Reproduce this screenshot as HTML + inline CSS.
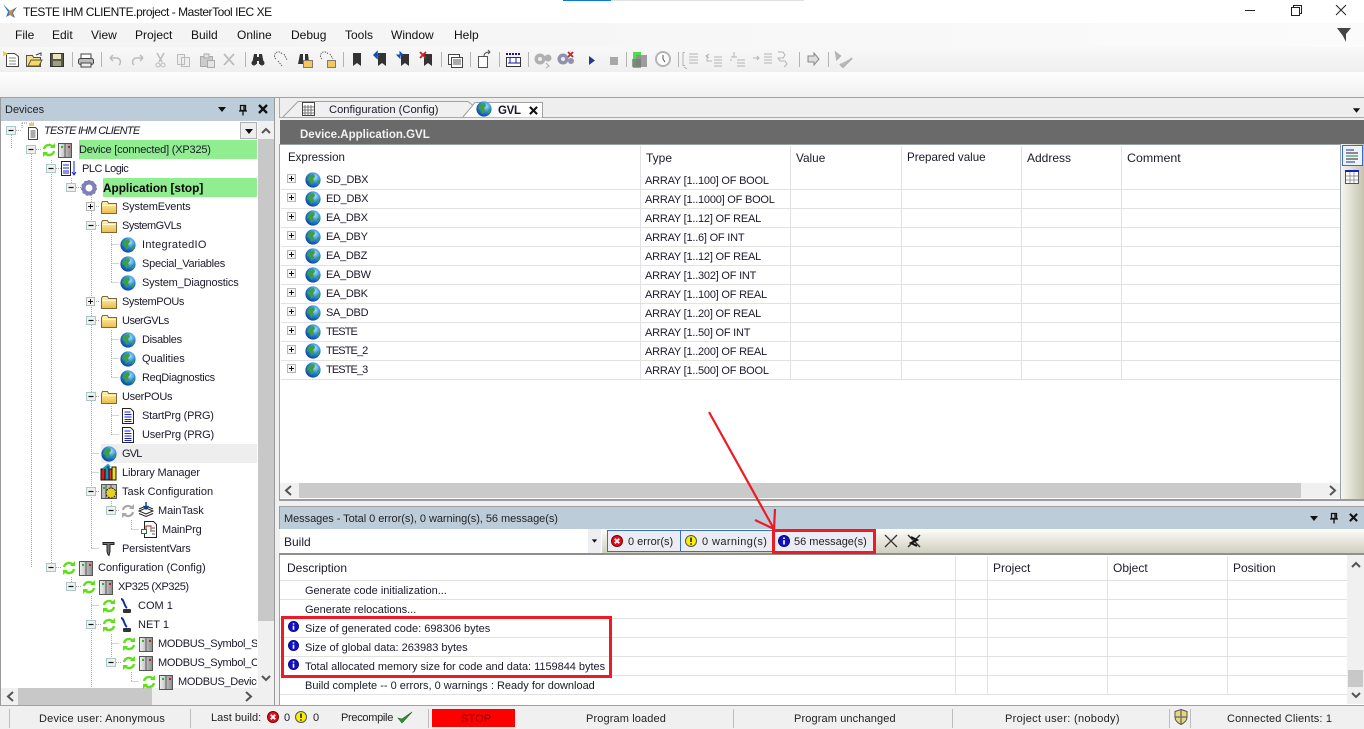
<!DOCTYPE html>
<html><head><meta charset="utf-8"><style>
html,body{margin:0;padding:0;width:1364px;height:728px;overflow:hidden;background:#f0f0f0}
*{box-sizing:border-box}
div,span.a{position:absolute}
.t{position:absolute;white-space:nowrap;font:11px/19px "Liberation Sans",sans-serif;color:#1a1a2a;height:19px}
.m{font-size:12px;line-height:24px;top:23px;color:#111}
.h{font-size:12px;line-height:20px}
.n{margin-top:1px;letter-spacing:-.3px}
.c{margin-top:1px;letter-spacing:-.9px}
.y{margin-top:1px;letter-spacing:-.22px}
.r{margin-top:1px}
.st{margin-top:2px;letter-spacing:.12px}
svg.i{position:absolute;overflow:visible}
.hl{position:absolute;height:1px;background:#e2e2e2}
.vl{position:absolute;width:1px;background:#e2e2e2}
.s{position:absolute;width:1px;background:#bdbdbd;top:709px;height:19px}
.ts{position:absolute;width:1px;background:#b4b4b4;top:52px;height:15px}
</style></head><body>
<svg width="0" height="0" style="position:absolute"><defs>
<radialGradient id="g1" cx=".62" cy=".32" r=".75"><stop offset="0" stop-color="#a8e0ff"/><stop offset=".5" stop-color="#2a86e0"/><stop offset="1" stop-color="#0a3a9a"/></radialGradient>
<linearGradient id="f1" x1="0" y1="0" x2="0" y2="1"><stop offset="0" stop-color="#fff4b8"/><stop offset="1" stop-color="#ecbc48"/></linearGradient>
<linearGradient id="d1" x1="0" y1="0" x2="1" y2="0"><stop offset="0" stop-color="#f2f2f2"/><stop offset="1" stop-color="#8d8d8d"/></linearGradient>
<symbol id="globe" viewBox="0 0 16 16" overflow="visible"><circle cx="8" cy="8" r="7.6" fill="url(#g1)"/><path d="M5 3l4-1 1 3-2 2 1 3-3 3-1-4-3-1 1-3zM12 9l2-1 0 3-2 2z" fill="#3aa040"/></symbol>
<symbol id="fold" viewBox="0 0 16 16"><path d="M.5 4.500l1-2h5l1 2h8v10H.5z" fill="url(#f1)" stroke="#7d6a3a"/><path d="M1.500 6.500h13" stroke="#fff8d8"/></symbol>
<symbol id="sync" viewBox="0 0 14 14"><path d="M2 6a5 5 0 0 1 8.500-2.500M12 8a5 5 0 0 1-8.500 2.500" fill="none" stroke="#5fe01a" stroke-width="2.400"/><path d="M8 5h5V0zM6 9H1v5z" fill="#5fe01a"/></symbol>
<symbol id="syncg" viewBox="0 0 14 14"><path d="M2 6a5 5 0 0 1 8.500-2.500M12 8a5 5 0 0 1-8.500 2.500" fill="none" stroke="#a8a8a8" stroke-width="2.200"/><path d="M8 5h5V0zM6 9H1v5z" fill="#a8a8a8"/></symbol>
<symbol id="dev" viewBox="0 0 14 16"><rect x=".5" y="1.500" width="13" height="14" fill="url(#d1)" stroke="#555"/><path d="M7 2v13" stroke="#555"/><rect x="3" y="4" width="2" height="2" fill="#2ab52a"/><rect x="10" y="4" width="2" height="2" fill="#c02020"/></symbol>
<symbol id="doc" viewBox="0 0 14 16"><path d="M1.500 .5h8l3 3v12h-11z" fill="#fff" stroke="#222"/><path d="M3.500 4h6M3.500 6.500h7M3.500 9h7M3.500 11.500h7M3.500 13.500h7" stroke="#1520d8"/></symbol>
<symbol id="plus" viewBox="0 0 11 11"><rect x="1.500" y="1.500" width="8" height="8" fill="#f4f4f4" stroke="#b5b5b5"/><path d="M3 5.500h5M5.500 3v5" stroke="#111"/></symbol>
<symbol id="minus" viewBox="0 0 11 11"><rect x=".5" y="1.500" width="9" height="8" fill="#f0f0f0" stroke="#a9c8c8"/><path d="M2.500 5.500h5" stroke="#111" stroke-width="1.200"/></symbol>
<symbol id="info" viewBox="0 0 12 12"><circle cx="6" cy="6" r="5.500" fill="#1010c8" stroke="#08087a"/><path d="M6 2.500v1.500M6 5.200V9.500" stroke="#fff" stroke-width="1.700"/></symbol>
<symbol id="err" viewBox="0 0 12 12"><circle cx="6" cy="6" r="5.500" fill="#e01020" stroke="#700"/><path d="M3.800 3.800l4.400 4.400M8.200 3.800L3.800 8.200" stroke="#fff" stroke-width="1.800"/></symbol>
<symbol id="warn" viewBox="0 0 12 12"><circle cx="6" cy="6" r="5.500" fill="#f8f000" stroke="#555"/><path d="M6 2.500V7M6 8.200v1.500" stroke="#222" stroke-width="1.600"/></symbol>
<symbol id="pin" viewBox="0 0 10 12"><path d="M2.500 1.500h5v5h-5zM1 7h8M5 7v4.500M6 2v5" fill="none" stroke="#111" stroke-width="1.300"/></symbol>
<symbol id="x" viewBox="0 0 10 10"><path d="M1 1l8 8M9 1l-8 8" stroke="#111" stroke-width="2.300"/></symbol>
<symbol id="tri" viewBox="0 0 10 5"><path d="M1 0h8L5 5z" fill="#111"/></symbol>
</defs></svg>

<!-- title bar -->
<div style="left:0;top:0;width:1364px;height:23px;background:#fff"></div>
<div style="left:563px;top:0;width:48px;height:1px;background:#0a78d8"></div>
<div style="left:611px;top:0;width:193px;height:1px;background:#e0e0e0"></div>
<svg class="i" style="left:3px;top:3px" width="16" height="16" viewBox="0 0 16 16"><path d="M0 1l7 7 7-4-4 6 2 5-5-3-4 2 2-5z" fill="#2a7fc8"/><path d="M6 8l5-2-2 4 1 4-4-3z" fill="#f08020"/></svg>
<span class="t" style="left:23px;top:2px;font-size:12px;letter-spacing:-.46px;line-height:20px;color:#111">TESTE IHM CLIENTE.project - MasterTool IEC XE</span>
<svg class="i" style="left:1244px;top:4px" width="120" height="14" viewBox="0 0 120 14" fill="none" stroke="#222"><path d="M1 6.500h10"/><path d="M47.500 3.500h8v8h-8zM49.500 3V1.500h8v8H56"/><path d="M92 1l10 10M102 1L92 11"/></svg>

<!-- menu bar -->
<div style="left:0;top:23px;width:1364px;height:24px;background:linear-gradient(90deg,#f3f3f3,#fbfbfb)"></div>
<span class="t m" style="left:15px">File</span><span class="t m" style="left:52px">Edit</span><span class="t m" style="left:91px">View</span><span class="t m" style="left:135px">Project</span><span class="t m" style="left:191px">Build</span><span class="t m" style="left:237px">Online</span><span class="t m" style="left:291px">Debug</span><span class="t m" style="left:345px">Tools</span><span class="t m" style="left:391px">Window</span><span class="t m" style="left:454px">Help</span>
<svg class="i" style="left:1336px;top:27px" width="16" height="16" viewBox="0 0 16 16"><path d="M1 1h14L10 7v8L7 9z" fill="#444"/></svg>

<!-- toolbar -->
<div style="left:0;top:47px;width:1364px;height:25px;background:linear-gradient(#f8f8f8,#efefef)"></div>
<div style="left:0;top:72px;width:1364px;height:25px;background:linear-gradient(#fefefe,#f0f0f0)"></div>
<div class="ts" style="left:72px"></div><div class="ts" style="left:101px"></div><div class="ts" style="left:245px"></div><div class="ts" style="left:343px"></div><div class="ts" style="left:441px"></div><div class="ts" style="left:470px"></div><div class="ts" style="left:499px"></div><div class="ts" style="left:528px"></div><div class="ts" style="left:626px"></div><div class="ts" style="left:678px"></div><div class="ts" style="left:799px"></div><div class="ts" style="left:828px"></div>
<svg class="i" style="left:0;top:47px" width="860" height="25" viewBox="0 0 860 25">
<path d="M6.500 6.500h8l4 3v10h-12z" fill="#fff" stroke="#444"/><path d="M9 11h7M9 14h7M9 17h7" stroke="#888"/><path d="M3 4l5 3-5 2z" fill="#e8d040"/>
<path d="M26.500 8.500h6l1 2h7v9h-14z" fill="#f4e090" stroke="#554"/><path d="M28 19l3-6h11l-3 6z" fill="#f8d860" stroke="#554"/><path d="M36 8l5-2v3" fill="none" stroke="#444"/>
<rect x="50.500" y="6.500" width="13" height="13" fill="#5a5a48" stroke="#333"/><rect x="53" y="7" width="8" height="5" fill="#e8e4c0"/><rect x="53" y="14" width="8" height="5" fill="#a0a080"/>
<path d="M81 11V7h10v4" fill="#fff" stroke="#444"/><rect x="78.500" y="11.500" width="15" height="6" rx="2" fill="#bbb" stroke="#444"/><rect x="81" y="16" width="10" height="4" fill="#eee" stroke="#444"/>
<g fill="none" stroke="#bcbcbc" stroke-width="1.500"><path d="M110 11h7a4 4 0 0 1 2 7M110 11l3-3M110 11l3 3"/><path d="M143 11h-7a4 4 0 0 0-2 7M143 11l-3-3M143 11l-3 3"/><path d="M157 6l5 9M164 6l-5 9"/></g><circle cx="158" cy="18" r="2" fill="none" stroke="#bbb"/><circle cx="163" cy="18" r="2" fill="none" stroke="#bbb"/>
<path d="M177.500 7.500h7v10h-7zM181.500 10.500h8v9h-8z" fill="#eee" stroke="#bbb"/>
<path d="M200.500 9.500h12v10h-12z" fill="#ccc" stroke="#aaa"/><path d="M204 7h5v4h-5zM207.500 13.500h7v7h-7z" fill="#e4e4e4" stroke="#aaa"/>
<path d="M224 7l10 11M234 7l-10 11" stroke="#bdbdbd" stroke-width="1.800"/>
<path d="M252 17l2-10h3v10zM259 17V7h3l2 10zM256 10h4v4h-4z" fill="#333"/><circle cx="254" cy="16" r="2.500" fill="#333"/><circle cx="262" cy="16" r="2.500" fill="#333"/>
<g fill="none" stroke="#666" stroke-dasharray="1.500 1"><path d="M276 12a4 4 0 1 1 6-5M278 14l4 5M284 7l3 6"/></g>
<path d="M298 17l2-10h3v10zM305 17V7h3l1 8z" fill="#333"/><rect x="303.500" y="13.500" width="9" height="7" fill="#f0c860" stroke="#876"/>
<g fill="none" stroke="#666" stroke-dasharray="1.500 1"><path d="M322 12a4 4 0 1 1 6-5M330 7l3 5"/></g><rect x="327.500" y="13.500" width="8" height="7" fill="#f0c860" stroke="#876"/>
<path d="M353 6h8v13l-4-3-4 3z" fill="#333"/><path d="M378 6h8v13l-4-3-4 3z" fill="#333"/><path d="M374 8h6M374 8l3-3v6z" stroke="#1050b0" fill="#1050b0" stroke-width="1.500"/>
<path d="M401 7h8v12l-4-3-4 3z" fill="#333"/><path d="M397 8h6l-3-3v6z" stroke="#1050b0" fill="#1050b0"/><path d="M424 7h8v12l-4-3-4 3z" fill="#333"/><path d="M420 5l6 6M426 5l-6 6" stroke="#c82020" stroke-width="1.800"/>
<rect x="448.500" y="7.500" width="11" height="10" fill="#fff" stroke="#444"/><rect x="451.500" y="10.500" width="11" height="10" fill="#fff" stroke="#444"/><path d="M453 13h8M453 15h8M453 17h8" stroke="#555"/>
<path d="M478.500 9.500h9v11h-9z" fill="#fff" stroke="#555"/><path d="M484 9c0-3 3-4 6-4M488 3l2 2-2 2" fill="none" stroke="#555"/>
<rect x="506.500" y="10.500" width="14" height="9" fill="#fff" stroke="#333"/><path d="M506 7h15" stroke="#1515a0" stroke-dasharray="2 1" stroke-width="2"/><path d="M510 11v5M516 11v5M508 16h12" stroke="#1515a0"/>
<g fill="#b0b0b0"><circle cx="540" cy="12" r="5.500"/><circle cx="548" cy="11" r="3.500"/></g><circle cx="540" cy="12" r="2" fill="#eee"/><path d="M546 16l3 3-3 2" fill="none" stroke="#aaa"/>
<g fill="#9090b0"><circle cx="563" cy="12" r="5.500"/><circle cx="571" cy="14" r="3"/></g><circle cx="563" cy="12" r="2" fill="#eee"/><path d="M568 5l5 5M573 5l-5 5" stroke="#d02020" stroke-width="1.800"/>
<path d="M589 9v9l6-4.500z" fill="#2a3590"/><rect x="610" y="10" width="8" height="8" fill="#a8a8a8"/>
<rect x="633" y="5" width="8" height="16" fill="#4fdc4f"/><rect x="636" y="8" width="11" height="12" fill="#8d8d8d" opacity=".85"/><rect x="632" y="12" width="9" height="8" fill="#777" opacity=".7"/>
<circle cx="663" cy="12" r="7" fill="#fff" stroke="#b4b4b4" stroke-width="2"/><path d="M663 8v4l2 3" stroke="#555" fill="none"/>
<g fill="none" stroke="#b4b4b4"><path d="M685 5.500h-2v13h2M689 7h9M689 10h9M689 13h9M689 16h9M684 20l3 2"/><path d="M708 9h-1v5h5M709 7l-3 2 3 2M714 10h8M714 13h8M714 16h8M714 19h8"/><path d="M731 10h6M734 5v5M730 13h2M737 13h8M737 16h8M737 19h8"/><path d="M753 11h6M757 9l2 2-2 2M764 7h8M764 10h8M764 13h8M764 16h8"/><path d="M778 5h5l2 3-2 3h-5l2 3h5l2 3-3 3"/></g>
<path d="M808 9h6V6l5 6-5 6v-3h-6z" fill="#ddd" stroke="#888"/>
<path d="M836 6l4 3-3 3zM840 17l3 3 9-9" fill="#bbb" stroke="#b4b4b4" stroke-width="2"/>
</svg>

<div style="left:0;top:97px;width:1364px;height:1px;background:#a0a0a0"></div>

<!-- Devices panel -->
<div style="left:0;top:98px;width:275px;height:608px;background:#fff;border:1px solid #9a9a9a;border-top:0"></div>
<div style="left:1px;top:98px;width:273px;height:23px;background:#bdccd9"></div>
<span class="t h" style="left:5px;top:100px;font-size:11px;color:#222">Devices</span>
<svg class="i" style="left:217px;top:107px" width="10" height="5"><use href="#tri"/></svg>
<svg class="i" style="left:238px;top:104px" width="10" height="12"><use href="#pin"/></svg>
<svg class="i" style="left:258px;top:104px" width="10" height="10"><use href="#x"/></svg>

<div style="left:79px;top:140px;width:178px;height:19px;background:#90ee90"></div>
<div style="left:103px;top:178px;width:154px;height:19px;background:#90ee90"></div>
<div style="left:101px;top:444px;width:156px;height:19px;background:#eeeeee"></div>
<div style="left:240px;top:122px;width:17px;height:17px;background:#eee;border:1px solid #b0b0b0"></div>
<svg class="i" style="left:244px;top:129px" width="10" height="5"><use href="#tri"/></svg>

<div style="left:258px;top:121px;width:16px;height:567px;background:#f0f0f0"></div>
<div style="left:258px;top:139px;width:16px;height:482px;background:#c8c8c8"></div>
<svg class="i" style="left:258px;top:121px" width="16" height="567" fill="none" stroke="#555" stroke-width="2"><path d="M4 12l4-4 4 4M4 555l4 4 4-4"/></svg>
<div style="left:1px;top:688px;width:273px;height:17px;background:#f0f0f0"></div>
<div style="left:18px;top:688px;width:134px;height:17px;background:#c8c8c8"></div>
<svg class="i" style="left:1px;top:688px" width="273" height="17" fill="none" stroke="#555" stroke-width="2"><path d="M12 4L7 8.500l5 4.500M245 4l5 4.500-5 4.500"/></svg>

<!-- tree dotted lines -->
<svg class="i" style="left:0;top:0" width="258" height="690" fill="none" stroke="#a8a8a8" stroke-dasharray="1 1">
<path d="M11.500 131v18M16 130.500h6M31.500 150v418M36 149.500h6M51.500 160v408M56 168.500h6M71.500 178v10M76 187.500h6M91.500 197v352M96 206.500h4M96 225.500h4M111.500 235v48M111.500 244.500h8M111.500 263.500h8M111.500 282.500h8M96 301.500h4M96 320.500h4M111.500 330v48M111.500 339.500h8M111.500 358.500h8M111.500 377.500h8M96 396.500h4M111.500 406v29M111.500 415.500h8M111.500 434.500h8M91.500 453.500h8M91.500 472.500h8M96 491.500h4M111.500 501v10M116 510.500h4M131.500 520v10M131.500 529.500h8M91.500 548.500h8M56 567.500h6M71.500 577v10M76 586.500h6M91.500 596v92M91.500 605.500h8M96 624.500h6M111.500 634v30M111.500 643.500h8M116 662.500h6M131.500 672v10M131.500 681.500h8"/>
</svg>

<!-- tree expanders -->
<svg class="i" style="left:6px;top:125px" width="11" height="11"><use href="#minus"/></svg>
<svg class="i" style="left:26px;top:144px" width="11" height="11"><use href="#minus"/></svg>
<svg class="i" style="left:46px;top:163px" width="11" height="11"><use href="#minus"/></svg>
<svg class="i" style="left:66px;top:182px" width="11" height="11"><use href="#minus"/></svg>
<svg class="i" style="left:85px;top:201px" width="11" height="11"><use href="#plus"/></svg>
<svg class="i" style="left:86px;top:220px" width="11" height="11"><use href="#minus"/></svg>
<svg class="i" style="left:85px;top:296px" width="11" height="11"><use href="#plus"/></svg>
<svg class="i" style="left:86px;top:315px" width="11" height="11"><use href="#minus"/></svg>
<svg class="i" style="left:86px;top:391px" width="11" height="11"><use href="#minus"/></svg>
<svg class="i" style="left:86px;top:486px" width="11" height="11"><use href="#minus"/></svg>
<svg class="i" style="left:106px;top:505px" width="11" height="11"><use href="#minus"/></svg>
<svg class="i" style="left:46px;top:562px" width="11" height="11"><use href="#minus"/></svg>
<svg class="i" style="left:66px;top:581px" width="11" height="11"><use href="#minus"/></svg>
<svg class="i" style="left:86px;top:619px" width="11" height="11"><use href="#minus"/></svg>
<svg class="i" style="left:106px;top:657px" width="11" height="11"><use href="#minus"/></svg>

<!-- tree icons -->
<svg class="i" style="left:21px;top:122px" width="18" height="18" viewBox="0 0 18 18"><path d="M7.500 5.500h7l2 2v10h-9z" fill="#fff" stroke="#444"/><path d="M9.500 9h5M9.500 11h5M9.500 13h5M9.500 15h5" stroke="#555"/><path d="M1 1h6M1 1v6M10 1h4" stroke="#888" stroke-dasharray="1 1" fill="none"/><rect x="8" y="1" width="5" height="3" fill="#f0c860"/></svg>
<svg class="i" style="left:42px;top:143px" width="14" height="14"><use href="#sync"/></svg>
<svg class="i" style="left:58px;top:142px" width="14" height="16"><use href="#dev"/></svg>
<svg class="i" style="left:61px;top:160px" width="18" height="17" viewBox="0 0 18 17"><path d="M.5 1.500h9v14h-9z" fill="#fff" stroke="#222"/><path d="M2 5h6M2 8h6M2 11h6M2 13h6" stroke="#1520d8"/><path d="M13 1v13M11 12l2 3 2-3" stroke="#1520d8" fill="none"/></svg>
<svg class="i" style="left:81px;top:180px" width="16" height="16" viewBox="0 0 16 16"><circle cx="8" cy="8" r="5.500" fill="none" stroke="#8080b8" stroke-width="4"/><circle cx="8" cy="8" r="7" fill="none" stroke="#8080b8" stroke-width="2" stroke-dasharray="2 2"/></svg>
<svg class="i" style="left:101px;top:199px" width="16" height="16"><use href="#fold"/></svg>
<svg class="i" style="left:101px;top:218px" width="16" height="16"><use href="#fold"/></svg>
<svg class="i" style="left:120px;top:237px" width="16" height="16"><use href="#globe"/></svg>
<svg class="i" style="left:120px;top:256px" width="16" height="16"><use href="#globe"/></svg>
<svg class="i" style="left:120px;top:275px" width="16" height="16"><use href="#globe"/></svg>
<svg class="i" style="left:101px;top:294px" width="16" height="16"><use href="#fold"/></svg>
<svg class="i" style="left:101px;top:313px" width="16" height="16"><use href="#fold"/></svg>
<svg class="i" style="left:120px;top:332px" width="16" height="16"><use href="#globe"/></svg>
<svg class="i" style="left:120px;top:351px" width="16" height="16"><use href="#globe"/></svg>
<svg class="i" style="left:120px;top:370px" width="16" height="16"><use href="#globe"/></svg>
<svg class="i" style="left:101px;top:389px" width="16" height="16"><use href="#fold"/></svg>
<svg class="i" style="left:121px;top:408px" width="14" height="16"><use href="#doc"/></svg>
<svg class="i" style="left:121px;top:427px" width="14" height="16"><use href="#doc"/></svg>
<svg class="i" style="left:101px;top:446px" width="16" height="16"><use href="#globe"/></svg>
<svg class="i" style="left:100px;top:464px" width="17" height="17" viewBox="0 0 17 17"><rect x="1" y="5" width="4" height="11" fill="#d02020" stroke="#111"/><rect x="5" y="3" width="4" height="13" fill="#1a8fb0" stroke="#111"/><rect x="9" y="5" width="3" height="11" fill="#e83030" stroke="#111"/><rect x="12" y="3" width="4" height="13" fill="#f0e020" stroke="#111"/><path d="M3 5l5-4 2 2" stroke="#18a0c0" stroke-width="2" fill="none"/></svg>
<svg class="i" style="left:101px;top:483px" width="16" height="16" viewBox="0 0 16 16"><rect x=".5" y="1.500" width="15" height="14" fill="#bbb" stroke="#555"/><path d="M5 2v13M10 2v13" stroke="#555"/><circle cx="10" cy="10" r="5" fill="#e8d020" stroke="#222" stroke-dasharray="2 1"/><rect x="2" y="4" width="2" height="2" fill="#2ab52a"/></svg>
<svg class="i" style="left:121px;top:504px" width="14" height="14"><use href="#syncg"/></svg>
<svg class="i" style="left:138px;top:502px" width="16" height="16" viewBox="0 0 16 16"><path d="M1 9l7-3 7 3-7 3zM1 11.500l7 3 7-3M1 7l7-3 7 3" fill="#fff" stroke="#222"/><path d="M8 0v6M5.500 4L8 7l2.500-3" stroke="#1040a0" stroke-width="1.500" fill="none"/></svg>
<svg class="i" style="left:141px;top:521px" width="16" height="17" viewBox="0 0 16 17"><path d="M3.500 .5h9l3 3v13h-12z" fill="#fff" stroke="#222"/><path d="M5 11V5h5v6" fill="none" stroke="#a02020"/><rect x=".5" y="8.500" width="5" height="4" fill="#fff" stroke="#208020"/><path d="M11 7h3M11 10h3M11 13h3" stroke="#555"/></svg>
<svg class="i" style="left:102px;top:541px" width="13" height="16" viewBox="0 0 13 16"><path d="M1 1.500h11v2H8v7l-1 4-1-1-1-3v-7H1z" fill="#777" stroke="#222"/></svg>
<svg class="i" style="left:62px;top:561px" width="14" height="14"><use href="#sync"/></svg>
<svg class="i" style="left:79px;top:560px" width="14" height="16"><use href="#dev"/></svg>
<svg class="i" style="left:82px;top:580px" width="14" height="14"><use href="#sync"/></svg>
<svg class="i" style="left:99px;top:579px" width="14" height="16"><use href="#dev"/></svg>
<svg class="i" style="left:102px;top:599px" width="14" height="14"><use href="#sync"/></svg>
<svg class="i" style="left:120px;top:598px" width="13" height="16" viewBox="0 0 13 16"><path d="M1 1c3 0 3 7 6 9" stroke="#1030a0" stroke-width="2" fill="none"/><rect x="3" y="11" width="8" height="4" rx="1" fill="#333"/></svg>
<svg class="i" style="left:102px;top:618px" width="14" height="14"><use href="#sync"/></svg>
<svg class="i" style="left:120px;top:617px" width="13" height="16" viewBox="0 0 13 16"><path d="M1 1c3 0 3 7 6 9" stroke="#1030a0" stroke-width="2" fill="none"/><rect x="3" y="11" width="8" height="4" rx="1" fill="#333"/></svg>
<svg class="i" style="left:122px;top:637px" width="14" height="14"><use href="#sync"/></svg>
<svg class="i" style="left:139px;top:636px" width="14" height="16"><use href="#dev"/></svg>
<svg class="i" style="left:122px;top:656px" width="14" height="14"><use href="#sync"/></svg>
<svg class="i" style="left:139px;top:655px" width="14" height="16"><use href="#dev"/></svg>
<svg class="i" style="left:142px;top:675px" width="14" height="13" viewBox="0 0 14 13"><use href="#sync" width="14" height="14"/></svg>
<svg class="i" style="left:159px;top:674px" width="14" height="14" viewBox="0 0 14 14"><use href="#dev" width="14" height="16"/></svg>

<!-- tree text -->
<div style="left:0;top:2px;width:0;height:0">
<span class="t" style="left:44px;top:120px;font-style:italic;letter-spacing:-.75px">TESTE IHM CLIENTE</span>
<span class="t" style="left:79px;top:139px;letter-spacing:-.2px">Device [connected] (XP325)</span>
<span class="t" style="left:82px;top:158px;letter-spacing:-.5px">PLC Logic</span>
<span class="t" style="left:103px;top:177px;font-weight:bold;font-size:11.800px;color:#000">Application [stop]</span>
<span class="t" style="left:122px;top:196px;letter-spacing:-.15px">SystemEvents</span>
<span class="t" style="left:122px;top:215px;letter-spacing:-.5px">SystemGVLs</span>
<span class="t" style="left:142px;top:234px;letter-spacing:.3px">IntegratedIO</span>
<span class="t" style="left:142px;top:253px;letter-spacing:-.25px">Special_Variables</span>
<span class="t" style="left:142px;top:272px;letter-spacing:-.17px">System_Diagnostics</span>
<span class="t" style="left:122px;top:291px;letter-spacing:-.4px">SystemPOUs</span>
<span class="t" style="left:122px;top:310px;letter-spacing:-.5px">UserGVLs</span>
<span class="t" style="left:142px;top:329px;letter-spacing:-.3px">Disables</span>
<span class="t" style="left:142px;top:348px">Qualities</span>
<span class="t" style="left:142px;top:367px;letter-spacing:-.3px">ReqDiagnostics</span>
<span class="t" style="left:122px;top:386px;letter-spacing:-.3px">UserPOUs</span>
<span class="t" style="left:142px;top:405px;letter-spacing:-.2px">StartPrg (PRG)</span>
<span class="t" style="left:142px;top:424px;letter-spacing:-.2px">UserPrg (PRG)</span>
<span class="t" style="left:122px;top:443px;letter-spacing:-.8px">GVL</span>
<span class="t" style="left:122px;top:462px;letter-spacing:-.15px">Library Manager</span>
<span class="t" style="left:122px;top:481px">Task Configuration</span>
<span class="t" style="left:158px;top:500px;letter-spacing:-.1px">MainTask</span>
<span class="t" style="left:162px;top:519px;letter-spacing:-.2px">MainPrg</span>
<span class="t" style="left:122px;top:538px;letter-spacing:-.15px">PersistentVars</span>
<span class="t" style="left:98px;top:557px">Configuration (Config)</span>
<span class="t" style="left:118px;top:576px;letter-spacing:-.45px">XP325 (XP325)</span>
<span class="t" style="left:138px;top:595px">COM 1</span>
<span class="t" style="left:138px;top:614px">NET 1</span>
<span class="t" style="left:158px;top:633px;width:99px;overflow:hidden;letter-spacing:-.3px">MODBUS_Symbol_Server</span>
<span class="t" style="left:158px;top:652px;width:99px;overflow:hidden;letter-spacing:-.3px">MODBUS_Symbol_Client</span>
<span class="t" style="left:178px;top:671px;width:79px;overflow:hidden;letter-spacing:-.3px">MODBUS_Device</span>
</div>

<!-- Editor -->
<div style="left:279px;top:98px;width:1085px;height:20px;background:#eeeeee;border-left:1px solid #aaa"></div>
<div style="left:279px;top:117px;width:1085px;height:1px;background:#a8a8a8"></div>
<svg class="i" style="left:280px;top:100px" width="270" height="18" viewBox="0 0 270 18"><path d="M3 17L18 1.500h170l5 4-10 11.500" fill="#f0f0f0" stroke="#a0a0a0"/><path d="M183 17L195 2.500h67.500v15" fill="#fff" stroke="#a0a0a0"/><rect x="22.500" y="2.500" width="12" height="13" fill="#fff" stroke="#444"/><path d="M25 5v10M28 5v10M31 5v10M23 7h11M23 10h11M23 13h11" stroke="#777"/></svg>
<span class="t h" style="left:329px;top:100px;font-size:11.200px;line-height:20px">Configuration (Config)</span>
<svg class="i" style="left:476px;top:101px" width="16" height="16"><use href="#globe"/></svg>
<span class="t h" style="left:498px;top:101px;font-weight:bold;font-size:11.500px;line-height:20px;letter-spacing:-.3px">GVL</span>
<svg class="i" style="left:529px;top:106px" width="9" height="9"><use href="#x"/></svg>
<svg class="i" style="left:1352px;top:108px" width="9" height="5"><use href="#tri"/></svg>

<div style="left:280px;top:120px;width:1084px;height:24px;background:#6a6a6a"></div>
<span class="t" style="left:300px;top:126px;font-weight:bold;color:#f2f2f2;font-size:11.500px">Device.Application.GVL</span>
<div style="left:279px;top:144px;width:1061px;height:355px;background:#fff;border-left:1px solid #a0a0a0"></div>
<div style="left:280px;top:144px;width:1060px;height:1px;background:#9aa0aa"></div>

<span class="t h" style="left:288px;top:148px;font-size:11.500px">Expression</span>
<span class="t h" style="left:646px;top:148px;font-size:12px">Type</span>
<span class="t h" style="left:796px;top:148px;font-size:11.800px">Value</span>
<span class="t h" style="left:907px;top:148px;font-size:11.600px">Prepared value</span>
<span class="t h" style="left:1027px;top:148px;font-size:12px">Address</span>
<span class="t h" style="left:1127px;top:148px;font-size:12.400px">Comment</span>
<div class="vl" style="left:640px;top:146px;height:233px"></div><div class="vl" style="left:790px;top:146px;height:233px"></div><div class="vl" style="left:901px;top:146px;height:233px"></div><div class="vl" style="left:1021px;top:146px;height:233px"></div><div class="vl" style="left:1121px;top:146px;height:233px"></div>
<div class="hl" style="left:281px;top:189px;width:1059px"></div><div class="hl" style="left:281px;top:208px;width:1059px"></div><div class="hl" style="left:281px;top:227px;width:1059px"></div><div class="hl" style="left:281px;top:246px;width:1059px"></div><div class="hl" style="left:281px;top:265px;width:1059px"></div><div class="hl" style="left:281px;top:284px;width:1059px"></div><div class="hl" style="left:281px;top:303px;width:1059px"></div><div class="hl" style="left:281px;top:322px;width:1059px"></div><div class="hl" style="left:281px;top:341px;width:1059px"></div><div class="hl" style="left:281px;top:360px;width:1059px"></div><div class="hl" style="left:281px;top:379px;width:1059px"></div>

<svg class="i" style="left:286px;top:173px" width="11" height="11"><use href="#plus"/></svg><svg class="i" style="left:305px;top:172px" width="16" height="16"><use href="#globe"/></svg><span class="t n" style="left:326px;top:170px">SD_DBX</span><span class="t y" style="left:645px;top:171px">ARRAY [1..100] OF BOOL</span>
<svg class="i" style="left:286px;top:192px" width="11" height="11"><use href="#plus"/></svg><svg class="i" style="left:305px;top:191px" width="16" height="16"><use href="#globe"/></svg><span class="t n" style="left:326px;top:189px">ED_DBX</span><span class="t y" style="left:645px;top:190px">ARRAY [1..1000] OF BOOL</span>
<svg class="i" style="left:286px;top:211px" width="11" height="11"><use href="#plus"/></svg><svg class="i" style="left:305px;top:210px" width="16" height="16"><use href="#globe"/></svg><span class="t n" style="left:326px;top:208px">EA_DBX</span><span class="t y" style="left:645px;top:209px">ARRAY [1..12] OF REAL</span>
<svg class="i" style="left:286px;top:230px" width="11" height="11"><use href="#plus"/></svg><svg class="i" style="left:305px;top:229px" width="16" height="16"><use href="#globe"/></svg><span class="t n" style="left:326px;top:227px">EA_DBY</span><span class="t y" style="left:645px;top:228px">ARRAY [1..6] OF INT</span>
<svg class="i" style="left:286px;top:249px" width="11" height="11"><use href="#plus"/></svg><svg class="i" style="left:305px;top:248px" width="16" height="16"><use href="#globe"/></svg><span class="t n" style="left:326px;top:246px">EA_DBZ</span><span class="t y" style="left:645px;top:247px">ARRAY [1..12] OF REAL</span>
<svg class="i" style="left:286px;top:268px" width="11" height="11"><use href="#plus"/></svg><svg class="i" style="left:305px;top:267px" width="16" height="16"><use href="#globe"/></svg><span class="t n" style="left:326px;top:265px">EA_DBW</span><span class="t y" style="left:645px;top:266px">ARRAY [1..302] OF INT</span>
<svg class="i" style="left:286px;top:287px" width="11" height="11"><use href="#plus"/></svg><svg class="i" style="left:305px;top:286px" width="16" height="16"><use href="#globe"/></svg><span class="t n" style="left:326px;top:284px">EA_DBK</span><span class="t y" style="left:645px;top:285px">ARRAY [1..100] OF REAL</span>
<svg class="i" style="left:286px;top:306px" width="11" height="11"><use href="#plus"/></svg><svg class="i" style="left:305px;top:305px" width="16" height="16"><use href="#globe"/></svg><span class="t n" style="left:326px;top:303px">SA_DBD</span><span class="t y" style="left:645px;top:304px">ARRAY [1..20] OF REAL</span>
<svg class="i" style="left:286px;top:325px" width="11" height="11"><use href="#plus"/></svg><svg class="i" style="left:305px;top:324px" width="16" height="16"><use href="#globe"/></svg><span class="t c" style="left:326px;top:322px">TESTE</span><span class="t y" style="left:645px;top:323px">ARRAY [1..50] OF INT</span>
<svg class="i" style="left:286px;top:344px" width="11" height="11"><use href="#plus"/></svg><svg class="i" style="left:305px;top:343px" width="16" height="16"><use href="#globe"/></svg><span class="t c" style="left:326px;top:341px">TESTE_2</span><span class="t y" style="left:645px;top:342px">ARRAY [1..200] OF REAL</span>
<svg class="i" style="left:286px;top:363px" width="11" height="11"><use href="#plus"/></svg><svg class="i" style="left:305px;top:362px" width="16" height="16"><use href="#globe"/></svg><span class="t c" style="left:326px;top:360px">TESTE_3</span><span class="t y" style="left:645px;top:361px">ARRAY [1..500] OF BOOL</span>

<!-- editor side toolbar -->
<div style="left:1340px;top:144px;width:24px;height:356px;background:linear-gradient(90deg,#f6f6ee,#c4c4b0);border-left:1px solid #9aa0aa"></div>
<svg class="i" style="left:1341px;top:145px" width="22" height="42" viewBox="0 0 22 42"><rect x="1.500" y=".5" width="20" height="20" fill="#eef2fa" stroke="#3a6cc0"/><path d="M5 5h8M5 8h12M5 11h7M5 14h12M5 17h9" stroke="#222"/><path d="M5 5h5M5 17h8" stroke="#1530c0"/><path d="M5 11h12" stroke="#208040"/><rect x="4.500" y="25.500" width="13" height="13" fill="#fff" stroke="#555"/><rect x="4" y="25" width="14" height="2" fill="#1520c0"/><path d="M9 27v11M13 27v11M5 31h12M5 35h12" stroke="#999"/></svg>

<!-- editor h scrollbar -->
<div style="left:280px;top:483px;width:1060px;height:15px;background:#f0f0f0"></div>
<div style="left:299px;top:483px;width:1002px;height:15px;background:#cacaca"></div>
<svg class="i" style="left:280px;top:483px" width="1060" height="15" fill="none" stroke="#555" stroke-width="2"><path d="M11 3l-5 4.500 5 4.500M1050 3l5 4.500-5 4.500"/></svg>
<div style="left:279px;top:499px;width:1085px;height:2px;background:#9a9a9a"></div>
<div style="left:279px;top:501px;width:1085px;height:5px;background:#f0f0f0"></div>

<!-- Messages panel -->
<div style="left:279px;top:506px;width:1085px;height:1px;background:#a0a0a0"></div>
<div style="left:279px;top:507px;width:1085px;height:22px;background:#bdccd9;border-left:1px solid #9a9a9a"></div>
<span class="t r" style="left:284px;top:509px;font-size:11px;color:#222;letter-spacing:-.05px">Messages - Total 0 error(s), 0 warning(s), 56 message(s)</span>
<svg class="i" style="left:1309px;top:516px" width="10" height="5"><use href="#tri"/></svg>
<svg class="i" style="left:1329px;top:512px" width="10" height="12"><use href="#pin"/></svg>
<svg class="i" style="left:1349px;top:513px" width="9" height="9"><use href="#x"/></svg>

<div style="left:280px;top:529px;width:1084px;height:24px;background:linear-gradient(#fdfdfb,#cfcfbd)"></div>
<div style="left:280px;top:529px;width:322px;height:24px;background:#fff"></div>
<div style="left:588px;top:529px;width:13px;height:24px;background:#eeeef2"></div>
<svg class="i" style="left:591px;top:539px" width="7" height="4" viewBox="0 0 10 5"><use href="#tri" width="10" height="5"/></svg>
<span class="t r" style="left:284px;top:532px;font-size:12px">Build</span>
<div style="left:607px;top:530px;width:74px;height:22px;background:#ececf4;border:1px solid #3a6cc0"></div>
<div style="left:681px;top:530px;width:92px;height:22px;background:#ececf4;border:1px solid #3a6cc0;border-left:0"></div>
<div style="left:773px;top:530px;width:102px;height:22px;background:#ececf4"></div>
<svg class="i" style="left:611px;top:535px" width="12" height="12"><use href="#err"/></svg>
<svg class="i" style="left:685px;top:535px" width="12" height="12"><use href="#warn"/></svg>
<svg class="i" style="left:778px;top:535px" width="12" height="12"><use href="#info"/></svg>
<span class="t r" style="left:628px;top:532px;color:#222">0 error(s)</span>
<span class="t r" style="left:702px;top:532px;color:#222;letter-spacing:.4px">0 warning(s)</span>
<span class="t r" style="left:794px;top:532px;color:#222">56 message(s)</span>
<svg class="i" style="left:884px;top:534px" width="40" height="14" fill="none" stroke="#333" stroke-width="1.300"><path d="M1 1l12 12M13 1L1 13"/><path d="M24 1l12 12M36 1L24 13" stroke-width="1.500"/><path d="M27 3l6 3-6 3 6 3" stroke="#111" stroke-width="2"/></svg>

<div style="left:279px;top:553px;width:1085px;height:2px;background:#8f8f8f"></div>
<div style="left:279px;top:555px;width:1085px;height:151px;background:#fff;border-left:1px solid #a0a0a0"></div>
<span class="t h" style="left:287px;top:558px;font-size:12px">Description</span>
<span class="t h" style="left:993px;top:558px;font-size:12px">Project</span>
<span class="t h" style="left:1113px;top:558px;font-size:12px">Object</span>
<span class="t h" style="left:1233px;top:558px;font-size:12px">Position</span>
<div class="vl" style="left:955px;top:556px;height:138px"></div><div class="vl" style="left:987px;top:556px;height:138px"></div><div class="vl" style="left:1107px;top:556px;height:138px"></div><div class="vl" style="left:1227px;top:556px;height:138px"></div>
<div class="hl" style="left:280px;top:580px;width:1067px"></div><div class="hl" style="left:280px;top:599px;width:1067px"></div><div class="hl" style="left:280px;top:618px;width:1067px"></div><div class="hl" style="left:280px;top:637px;width:1067px"></div><div class="hl" style="left:280px;top:656px;width:1067px"></div><div class="hl" style="left:280px;top:675px;width:1067px"></div><div class="hl" style="left:280px;top:694px;width:1067px"></div>
<span class="t r" style="left:305px;top:581px">Generate code initialization...</span>
<span class="t r" style="left:305px;top:600px">Generate relocations...</span>
<span class="t r" style="left:305px;top:619px">Size of generated code: 698306 bytes</span>
<span class="t r" style="left:305px;top:638px">Size of global data: 263983 bytes</span>
<span class="t r" style="left:305px;top:657px;letter-spacing:-.03px">Total allocated memory size for code and data: 1159844 bytes</span>
<span class="t r" style="left:305px;top:676px">Build complete -- 0 errors, 0 warnings : Ready for download</span>
<svg class="i" style="left:288px;top:621px" width="11" height="11" viewBox="0 0 12 12"><use href="#info" width="12" height="12"/></svg>
<svg class="i" style="left:288px;top:640px" width="11" height="11" viewBox="0 0 12 12"><use href="#info" width="12" height="12"/></svg>
<svg class="i" style="left:288px;top:659px" width="11" height="11" viewBox="0 0 12 12"><use href="#info" width="12" height="12"/></svg>

<div style="left:1347px;top:555px;width:17px;height:149px;background:#f0f0f0"></div>
<div style="left:1348px;top:670px;width:15px;height:17px;background:#c8c8c8"></div>
<svg class="i" style="left:1347px;top:555px" width="17" height="149" fill="none" stroke="#555" stroke-width="2"><path d="M5 12l4-4 4 4M5 138l4 4 4-4"/></svg>

<!-- Red annotations -->
<div style="left:772px;top:529px;width:104px;height:25px;border:3px solid #ed1c24"></div>
<div style="left:281px;top:616px;width:331px;height:62px;border:3px solid #ed1c24"></div>
<svg class="i" style="left:700px;top:405px" width="90" height="135" fill="none" stroke="#ed1c24" stroke-width="2.200"><path d="M9 7L74 124M55 115l19 9 1-20"/></svg>

<!-- status bar -->
<div style="left:0;top:705px;width:1364px;height:1px;background:#a0a0a0"></div>
<div style="left:0;top:706px;width:1364px;height:22px;background:#f0f0f0"></div>
<div class="s" style="left:9px"></div><div class="s" style="left:190px"></div><div class="s" style="left:428px"></div><div class="s" style="left:733px"></div><div class="s" style="left:952px"></div><div class="s" style="left:1169px"></div><div class="s" style="left:1190px"></div>
<span class="t st" style="left:39px;top:708px;color:#222;letter-spacing:.2px">Device user: Anonymous</span>
<span class="t" style="margin-top:2px;left:211px;top:707px;color:#222">Last build:</span>
<svg class="i" style="left:267px;top:711px" width="12" height="12"><use href="#err"/></svg>
<span class="t" style="margin-top:2px;left:284px;top:707px;color:#222">0</span>
<svg class="i" style="left:295px;top:711px" width="12" height="12"><use href="#warn"/></svg>
<span class="t" style="margin-top:2px;left:313px;top:707px;color:#222">0</span>
<span class="t" style="margin-top:2px;left:341px;top:707px;color:#222;letter-spacing:-.3px">Precompile</span>
<svg class="i" style="left:397px;top:711px" width="16" height="13" viewBox="0 0 16 13"><path d="M1 7l4 5L15 1 5 8z" fill="#2a9a2a" stroke="#206020" stroke-width=".6"/></svg>
<div style="left:432px;top:709px;width:83px;height:18px;background:#fe0000"></div>
<span class="t st" style="left:461px;top:708px;color:#8a0000">STOP</span>
<span class="t st" style="left:586px;top:708px;color:#222">Program loaded</span>
<span class="t st" style="left:794px;top:708px;color:#222">Program unchanged</span>
<span class="t st" style="left:1005px;top:708px;color:#222;letter-spacing:.3px">Project user: (nobody)</span>
<svg class="i" style="left:1174px;top:709px" width="14" height="16" viewBox="0 0 14 16"><path d="M7 .5l6 2v6c0 3-3 5.500-6 7-3-1.500-6-4-6-7v-6z" fill="#e8d878" stroke="#555"/><path d="M7 1v14M1.500 8h11" stroke="#777" stroke-width="1.500"/></svg>
<span class="t st" style="left:1227px;top:708px;color:#222;letter-spacing:.15px">Connected Clients: 1</span>
</body></html>
